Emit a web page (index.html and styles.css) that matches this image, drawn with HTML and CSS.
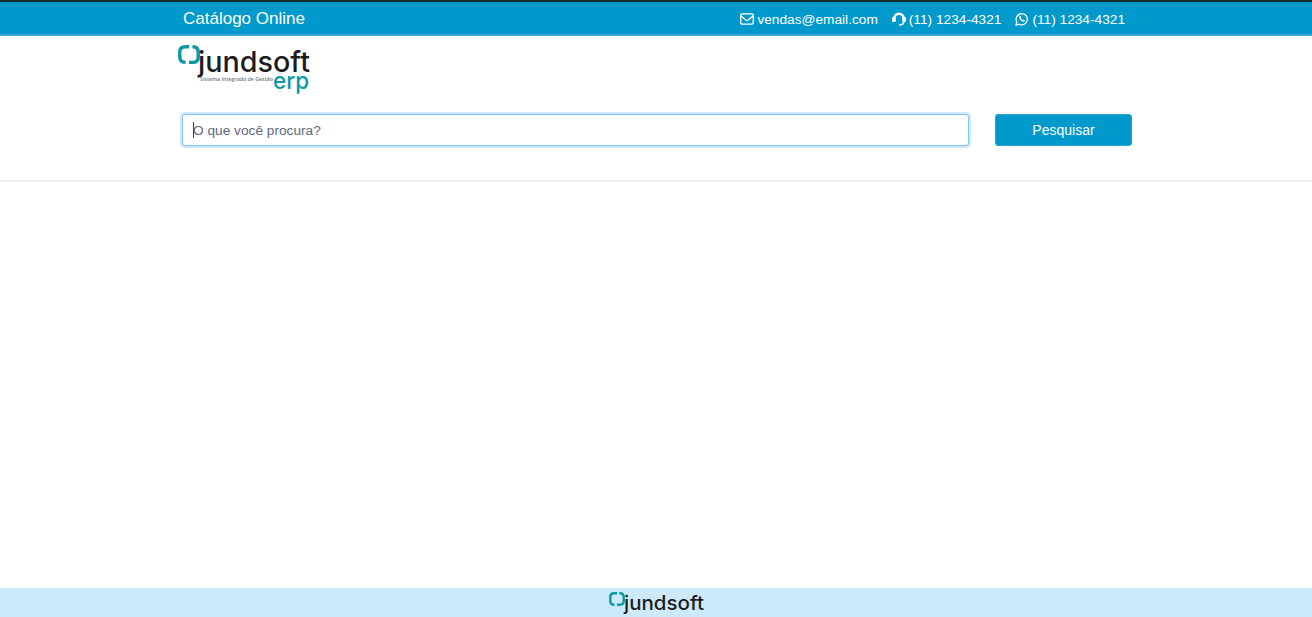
FILE: index.html
```html
<!DOCTYPE html>
<html lang="pt-BR">
<head>
    <meta charset="UTF-8">
    <meta name="viewport" content="width=device-width, initial-scale=1.0">
    <title>Catálogo Online</title>
    <link rel="stylesheet" href="styles.css">
</head>
<body>
    <div class="topbar">
        <div class="container topbar-inner">
            <span class="catalog-title">Catálogo Online</span>
            <div class="contacts">
                <span class="contact">
                    <svg class="icon" viewBox="0 0 14 12" width="14" height="12">
                        <rect x="0.7" y="0.9" width="12.6" height="10.2" rx="1.3" fill="none" stroke="#fff" stroke-width="1.4"/>
                        <path d="M1 3 L5.8 7 Q7 7.9 8.2 7 L13 3" fill="none" stroke="#fff" stroke-width="1.4"/>
                    </svg>
                    vendas@email.com
                </span>
                <span class="contact">
                    <svg class="icon" viewBox="0 0 14 14" width="14" height="14">
                        <path d="M2.2 6.5 A4.8 4.8 0 0 1 11.8 6.5" fill="none" stroke="#fff" stroke-width="2.4"/>
                        <rect x="0" y="5" width="3.8" height="5" rx="1.3" fill="#fff"/>
                        <rect x="10.2" y="5" width="3.8" height="5" rx="1.3" fill="#fff"/>
                        <path d="M11.9 9.5 Q11.8 13 7 13" fill="none" stroke="#fff" stroke-width="1.6"/>
                    </svg>
                    (11) 1234-4321
                </span>
                <span class="contact">
                    <svg class="icon" viewBox="0 0 14 14" width="14" height="14">
                        <path d="M0.9 13.1 L1.8 9.9 A5.6 5.6 0 1 1 4.1 12.2 Z" fill="none" stroke="#fff" stroke-width="1.3" stroke-linejoin="round"/>
                        <path d="M4.9 3.9 Q4 4.6 4.2 5.9 Q4.9 8 6.6 9.1 Q8 9.9 9.1 9.6 Q10 9.2 10 8.3 L8.6 7.5 L7.9 8.2 Q6.4 7.6 5.7 6 L6.3 5.3 L5.6 3.9 Z" fill="#fff"/>
                    </svg>
                    (11) 1234-4321
                </span>
            </div>
        </div>
    </div>

    <header class="header">
        <div class="container">
            <svg class="logo" viewBox="0 0 134 50" width="134" height="50">
                <g fill="none" stroke="#0e98a6" stroke-width="3.4">
                    <path d="M11 1.8 H7 Q1.8 1.8 1.8 7 V12 Q1.8 17.2 7 17.2 H7.5"/>
                    <path d="M11 17.4 H15 Q20.2 17.4 20.2 12.2 V7 Q20.2 1.8 15 1.8 H14.5"/>
                </g>
                <text class="logo-name" x="20" y="27" textLength="112" lengthAdjust="spacingAndGlyphs">jundsoft</text>
                <text class="logo-tagline" x="22" y="36" textLength="73" lengthAdjust="spacingAndGlyphs">Sistema Integrado de Gestão</text>
                <text class="logo-erp" x="95" y="44" textLength="36" lengthAdjust="spacingAndGlyphs">erp</text>
            </svg>
            <form class="search">
                <div class="search-field">
                    <input class="search-input" type="text" placeholder="O que você procura?">
                    <span class="caret"></span>
                </div>
                <button class="search-button" type="button">Pesquisar</button>
            </form>
        </div>
    </header>

    <main class="content"></main>

    <footer class="footer">
        <svg class="footer-logo" viewBox="0 0 96 25" width="96" height="25">
            <g fill="none" stroke="#0e98a6" stroke-width="2.4">
                <path d="M8 1.3 H5 Q1.3 1.3 1.3 5 V9 Q1.3 12.7 5 12.7 H5.5"/>
                <path d="M8 12.7 H11 Q14.7 12.7 14.7 9 V5 Q14.7 1.3 11 1.3 H10.5"/>
            </g>
            <text class="logo-name-small" x="15" y="18" textLength="80" lengthAdjust="spacingAndGlyphs">jundsoft</text>
        </svg>
    </footer>
</body>
</html>
```

FILE: styles.css
```css
html, body {
    height: 100%;
}
body {
    margin: 0;
    display: flex;
    flex-direction: column;
    min-height: 100vh;
    font-family: "Liberation Sans", Arial, sans-serif;
    background-color: #fff;
    color: #333;
}
.container {
    width: 950px;
    margin: 0 auto;
    padding-left: 2px;
}
.topbar {
    height: 32px;
    background-color: #0099cc;
    border-top: 2px solid #1c2a2e;
    border-bottom: 2px solid #3aa6d8;
    color: #fff;
}
.topbar-inner {
    display: flex;
    justify-content: space-between;
    align-items: center;
    height: 30px;
    padding-top: 2px;
}
.catalog-title {
    font-size: 17px;
    margin-left: 1px;
}
.contacts {
    display: flex;
    gap: 14px;
    margin-right: 7px;
    font-size: 13.7px;
}
.contact {
    display: flex;
    align-items: center;
    gap: 3px;
}
.icon {
    display: block;
}
.header {
    height: 144px;
    border-bottom: 2px solid #eeeeee;
}
.logo {
    display: block;
    margin: 9px 0 0 -4px;
}
.logo-name {
    font-family: Inter, sans-serif;
    font-size: 28px;
    font-weight: 500;
    fill: #1d1d1f;
}
.logo-tagline {
    font-family: "Open Sans", sans-serif;
    font-size: 6px;
    font-weight: 600;
    fill: #777;
}
.logo-erp {
    font-family: Inter, sans-serif;
    font-size: 24px;
    font-weight: 500;
    fill: #0e98a6;
}
.search {
    display: flex;
    justify-content: space-between;
    margin-top: 19px;
}
.search-field {
    position: relative;
    width: 787px;
}
.search-input {
    display: block;
    width: 100%;
    height: 32px;
    box-sizing: border-box;
    padding: 0 10px;
    border: 1px solid #85c2f2;
    border-radius: 3px;
    box-shadow: 0 0 0 2px #cce8fd;
    font-family: "Liberation Sans", Arial, sans-serif;
    font-size: 13.7px;
    outline: none;
}
.search-input::placeholder {
    color: #5f6a80;
    opacity: 1;
}
.caret {
    position: absolute;
    left: 11px;
    top: 8px;
    width: 1px;
    height: 16px;
    background-color: #3a3f6b;
}
.search-button {
    width: 137px;
    height: 32px;
    background-color: #0099cc;
    color: #fff;
    border: 1px solid #2ba3cf;
    border-radius: 3px;
    font-family: "Liberation Sans", Arial, sans-serif;
    font-size: 14px;
}
.content {
    flex: 1;
}
.footer {
    height: 29px;
    background-color: #cdeafd;
    display: flex;
    justify-content: center;
    align-items: flex-start;
    overflow: hidden;
}
.footer-logo {
    display: block;
    margin: 4px 0 0 1px;
}
.logo-name-small {
    font-family: Inter, sans-serif;
    font-size: 20px;
    font-weight: 500;
    fill: #1d1d1f;
}
```
